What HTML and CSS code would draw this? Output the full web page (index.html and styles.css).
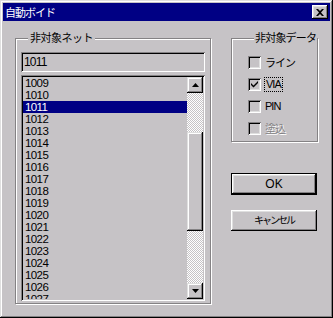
FILE: index.html
```html
<!DOCTYPE html>
<html>
<head lang="ja">
    <meta charset="UTF-8">
    <title>自動ボイド</title>
    <link rel="stylesheet" href="styles.css">
</head>
<body>
    <div class="win">
        <div class="title">
            <span>自動ボイド</span>
            <div class="close">
                <svg width="8" height="7" viewBox="0 0 8 7"><path d="M0 0h2l2 2 2-2h2L5 3.5 8 7H6L4 5 2 7H0l3-3.5z" fill="#000"/></svg>
            </div>
        </div>
        <div class="main">
            <fieldset class="group nets">
                <legend>非対象ネット</legend>
                <div class="edit">1011</div>
                <div class="list">
                    <ul class="items">
                        <li>1009</li>
                        <li>1010</li>
                        <li class="sel">1011</li>
                        <li>1012</li>
                        <li>1013</li>
                        <li>1014</li>
                        <li>1015</li>
                        <li>1016</li>
                        <li>1017</li>
                        <li>1018</li>
                        <li>1019</li>
                        <li>1020</li>
                        <li>1021</li>
                        <li>1022</li>
                        <li>1023</li>
                        <li>1024</li>
                        <li>1025</li>
                        <li>1026</li>
                        <li>1027</li>
                    </ul>
                    <div class="scroll">
                        <div class="sbtn"><svg width="7" height="4" viewBox="0 0 7 4"><path d="M3.5 0L7 4H0z" fill="#000"/></svg></div>
                        <div class="track t1"></div>
                        <div class="thumb"></div>
                        <div class="track t2"></div>
                        <div class="sbtn"><svg width="7" height="4" viewBox="0 0 7 4"><path d="M0 0h7L3.5 4z" fill="#000"/></svg></div>
                    </div>
                </div>
            </fieldset>
            <div class="side">
                <fieldset class="group data">
                    <legend>非対象データ</legend>
                    <div class="check"><span class="box"></span><span>ライン</span></div>
                    <div class="check"><span class="box"><svg width="7" height="7" viewBox="0 0 7 7"><path d="M0 2l2.5 2.5L7 0v2L2.5 6.5 0 4z" fill="#000"/></svg></span><span class="focus">VIA</span></div>
                    <div class="check"><span class="box"></span><span>PIN</span></div>
                    <div class="check off"><span class="box"></span><span>塗込</span></div>
                </fieldset>
                <div class="btn default">OK</div>
                <div class="btn cancel">キャンセル</div>
            </div>
        </div>
    </div>
</body>
</html>
```
FILE: styles.css
```css
* {
    margin: 0;
    padding: 0;
    list-style: none;
    box-sizing: border-box;
}
body{
    background: #c6c3c6;
    font-family: "Liberation Sans", "Noto Sans CJK JP", sans-serif;
    font-size: 11px;
    color: #000;
}
.win{
    width:333px;
    height:318px;
    padding:3px;
    background: #c6c3c6;
    box-shadow: inset -1px -1px #000, inset 1px 1px #dfdfdf, inset -2px -2px #848284, inset 2px 2px #fff;
}
.title{
    height:18px;
    background: #000084;
    color: #fff;
    display: flex;
    align-items: center;
    justify-content: space-between;
    padding: 0 2px 0 2px;
    font-size: 11px;
    letter-spacing: -1px;
}
.close{
    width:16px;
    height:14px;
    background: #c6c3c6;
    box-shadow: inset -1px -1px #000, inset 1px 1px #fff, inset -2px -2px #848284, inset 2px 2px #dfdfdf;
    display: flex;
    align-items: center;
    justify-content: center;
}
.main{
    display: flex;
    padding: 11px 0 0 12px;
}
.group{
    border: 1px solid #848284;
    box-shadow: inset 1px 1px #fff, 1px 1px #fff;
}
.group legend{
    margin-left: 7px;
    padding: 0 2px;
    line-height: 12px;
    height: 12px;
    white-space: nowrap;
    letter-spacing: -0.5px;
    background: #c6c3c6;
}
.data legend{
    margin-left: 6px;
    padding: 0 1px;
    letter-spacing: -0.8px;
}
.nets{
    width:196px;
    height:272px;
    padding: 8px 5px 0 5px;
}
.edit{
    height:20px;
    padding: 4px 3px 0;
    line-height: 12px;
    font-size: 12px;
    letter-spacing: -0.8px;
    box-shadow: inset 1px 1px #848284, inset -1px -1px #fff, inset 2px 2px #000, inset -2px -2px #c6c3c6;
}
.list{
    margin-top: 3px;
    height:226px;
    padding: 2px;
    display: flex;
    box-shadow: inset 1px 1px #848284, inset -1px -1px #fff, inset 2px 2px #000, inset -2px -2px #c6c3c6;
}
.items{
    flex: 1;
    overflow: hidden;
}
.items li{
    height:12px;
    line-height: 12px;
    font-size: 11.5px;
    letter-spacing: -0.6px;
    padding-left: 2px;
}
.items li.sel{
    background: #000084;
    color: #fff;
}
.scroll{
    width:16px;
    display: flex;
    flex-direction: column;
}
.sbtn,.thumb{
    background: #c6c3c6;
    box-shadow: inset -1px -1px #000, inset 1px 1px #dfdfdf, inset -2px -2px #848284, inset 2px 2px #fff;
}
.sbtn{
    height:16px;
    display: flex;
    align-items: center;
    justify-content: center;
}
.thumb{
    height:99px;
}
.track{
    background: repeating-conic-gradient(#fff 0 25%, #c6c3c6 0 50%) 0 0/2px 2px;
}
.t1{
    height:39px;
}
.t2{
    flex: 1;
}
.side{
    margin-left: 20px;
    width:86px;
}
.data{
    height:110px;
    padding: 7px 0 0 16px;
}
.check{
    height:22px;
    display: flex;
    align-items: center;
    letter-spacing: -1px;
}
.box{
    width:13px;
    height:13px;
    margin-right: 4px;
    background: #c6c3c6;
    box-shadow: inset 1px 1px #848284, inset -1px -1px #fff, inset 2px 2px #000, inset -2px -2px #dfdfdf;
    display: flex;
    align-items: center;
    justify-content: center;
}
.focus{
    outline: 1px dotted #000;
    padding: 0 1px;
    line-height: 13px;
}
.check.off{
    color: #848284;
    text-shadow: 1px 1px #fff;
}
.btn{
    height:21px;
    line-height: 21px;
    text-align: center;
    background: #c6c3c6;
    box-shadow: inset -1px -1px #000, inset 1px 1px #fff, inset -2px -2px #848284, inset 2px 2px #dfdfdf;
}
.btn.default{
    margin-top: 31px;
    height:22px;
    line-height: 20px;
    border: 1px solid #000;
    font-size: 12px;
}
.btn.cancel{
    margin-top: 15px;
    font-size: 10px;
    letter-spacing: -2px;
}
```
